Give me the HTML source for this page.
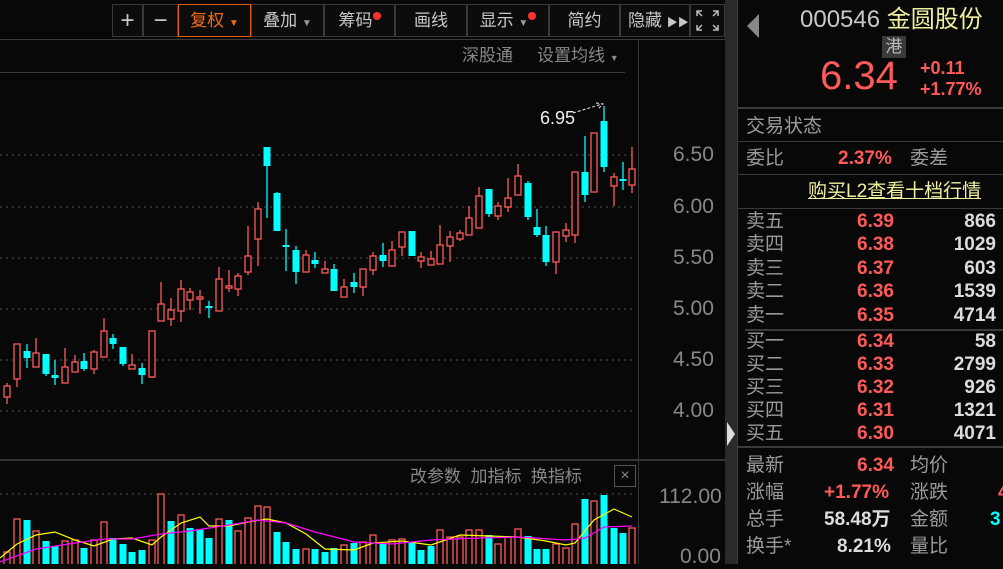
<!DOCTYPE html>
<html><head><meta charset="utf-8"><style>
*{margin:0;padding:0;box-sizing:border-box}
body{width:1003px;height:564px;background:#080808;overflow:hidden;position:relative;font-family:"Liberation Sans","Noto Sans CJK SC",sans-serif;color:#aaa}
.a{position:absolute;white-space:nowrap;line-height:24px}
.btn{position:absolute;top:4px;height:33px;border:1px solid #3a3a3a;color:#c8c8c8;font-size:17px;line-height:31px;text-align:center;background:#0c0c0c}
.lab{color:#9a9a9a;font-size:19px}
.r{color:#ff5a5a;font-weight:bold;font-size:19px}
.w{color:#dcdcdc;font-weight:bold;font-size:19px}
.hl{position:absolute;height:2px;background:#3a3a3a}
</style></head><body>
<div class="btn" style="left:112px;width:31px;font-size:24px">+</div>
<div class="btn" style="left:143px;width:35px;font-size:24px">−</div>
<div class="btn" style="left:178px;width:73px;color:#f06a1a;border-color:#e0600f">复权 <span style="font-size:10px">▼</span></div>
<div class="btn" style="left:251px;width:73px">叠加 <span style="font-size:10px;color:#999">▼</span></div>
<div class="btn" style="left:324px;width:71px">筹码<span style="display:inline-block;width:8px;height:8px;border-radius:4px;background:#ff3030;vertical-align:top;margin-top:7px"></span></div>
<div class="btn" style="left:395px;width:72px">画线</div>
<div class="btn" style="left:467px;width:82px">显示 <span style="font-size:10px;color:#999">▼</span><span style="display:inline-block;width:8px;height:8px;border-radius:4px;background:#ff3030;vertical-align:top;margin-top:7px"></span></div>
<div class="btn" style="left:549px;width:71px">简约</div>
<div class="btn" style="left:620px;width:70px;text-align:left;padding-left:7px">隐藏 <span style="font-size:11px">▶▶</span></div>
<div class="btn" style="left:690px;width:35px">
<svg width="33" height="31" viewBox="0 0 33 31"><g stroke="#bbb" stroke-width="1.5" fill="none"><path d="M6 11V6h5M6 6l5 5M27 11V6h-5M27 6l-5 5M6 20v5h5M6 25l5-5M27 20v5h-5M27 25l-5-5"/></g></svg></div>
<div class="hl" style="left:0;top:39px;width:737px;height:1px"></div>
<div class="a lab" style="left:462px;top:44px;font-size:17px;color:#888">深股通</div>
<div class="a lab" style="left:537px;top:44px;font-size:17px;color:#888">设置均线 <span style="font-size:9px">▼</span></div>
<div class="hl" style="left:0;top:72px;width:625px;height:1px"></div>
<div class="a" style="left:638px;top:40px;width:1px;height:524px;background:#333"></div>
<div class="a" style="left:725px;top:0;width:12px;height:564px;background:#2a2a2a"></div>
<svg class="a" style="left:727px;top:422px" width="8" height="24"><path d="M0 0L8 12L0 24Z" fill="#ddd"/></svg>
<div class="a" style="left:737px;top:0;width:1px;height:564px;background:#3a3a3a"></div>
<div class="a" style="left:673px;top:143px;font-size:21px;color:#888">6.50</div>
<div class="a" style="left:673px;top:195px;font-size:21px;color:#888">6.00</div>
<div class="a" style="left:673px;top:246px;font-size:21px;color:#888">5.50</div>
<div class="a" style="left:673px;top:297px;font-size:21px;color:#888">5.00</div>
<div class="a" style="left:673px;top:348px;font-size:21px;color:#888">4.50</div>
<div class="a" style="left:673px;top:399px;font-size:21px;color:#888">4.00</div>
<div class="a" style="left:659px;top:485px;font-size:21px;color:#888">112.00</div>
<div class="a" style="left:680px;top:545px;font-size:21px;color:#888">0.00</div>
<div class="a" style="left:0;top:459px;width:725px;height:2px;background:#333"></div>
<div class="a lab" style="left:410px;top:465px;font-size:17px;color:#888">改参数 &nbsp;加指标 &nbsp;换指标</div>
<div class="a" style="left:614px;top:465px;width:22px;height:22px;border:1px solid #555;color:#888;font-size:16px;line-height:20px;text-align:center">×</div>
<div class="a" style="left:540px;top:106px;font-size:18px;color:#eee">6.95</div>
<svg id="ch" class="a" style="left:0;top:0" width="638" height="564"></svg>
<svg class="a" style="left:747px;top:14px" width="12" height="24"><path d="M12 0L0 12L12 24Z" fill="#888"/></svg>
<div class="a" style="left:800px;top:6px;font-size:24px;line-height:28px;color:#c8c8c8">000546 <span style="color:#f0f0a0">金圆股份</span></div>
<div class="a" style="left:882px;top:36px;width:24px;height:22px;background:#3a3a3a;color:#bbb;font-size:17px;line-height:22px;text-align:center">港</div>
<div class="a" style="left:820px;top:56px;font-size:40px;line-height:40px;color:#ff5a5a">6.34</div>
<div class="a r" style="left:920px;top:57px;font-size:18px;line-height:22px">+0.11</div>
<div class="a r" style="left:920px;top:78px;font-size:18px;line-height:22px">+1.77%</div>
<div class="hl" style="left:737px;top:107px;width:266px"></div>
<div class="a lab" style="left:746px;top:115px">交易状态</div>
<div class="hl" style="left:737px;top:141px;width:266px;height:1px"></div>
<div class="a lab" style="left:746px;top:147px">委比</div>
<div class="a r" style="left:838px;top:147px">2.37%</div>
<div class="a lab" style="left:910px;top:147px">委差</div>
<div class="hl" style="left:737px;top:174px;width:266px;height:1px"></div>
<div class="a" style="left:808px;top:180px;font-size:19px;color:#f0f0a0;text-decoration:underline">购买L2查看十档行情</div>
<div class="hl" style="left:737px;top:208px;width:266px;height:1px"></div>
<div id="ob"></div>
<div class="hl" style="left:745px;top:329px;width:258px"></div>
<div class="hl" style="left:737px;top:446px;width:266px"></div>
<div class="a lab" style="left:746px;top:454px">最新</div><div class="a r" style="left:857px;top:454px">6.34</div><div class="a lab" style="left:910px;top:454px">均价</div>
<div class="a lab" style="left:746px;top:481px">涨幅</div><div class="a r" style="left:824px;top:481px">+1.77%</div><div class="a lab" style="left:910px;top:481px">涨跌</div><div class="a r" style="left:998px;top:481px">4</div>
<div class="a lab" style="left:746px;top:508px">总手</div><div class="a w" style="left:824px;top:508px">58.48万</div><div class="a lab" style="left:910px;top:508px">金额</div><div class="a w" style="left:990px;top:508px;color:#00ffff">3</div>
<div class="a lab" style="left:746px;top:535px">换手*</div><div class="a w" style="left:837px;top:535px">8.21%</div><div class="a lab" style="left:910px;top:535px">量比</div>
<script>
var ob=[["卖五","6.39","866"],["卖四","6.38","1029"],["卖三","6.37","603"],["卖二","6.36","1539"],["卖一","6.35","4714"],["买一","6.34","58"],["买二","6.33","2799"],["买三","6.32","926"],["买四","6.31","1321"],["买五","6.30","4071"]];
var ys=[210,233,257,280,304,330,353,376,399,422],h="";
ob.forEach(function(o,i){h+='<div class="a lab" style="left:746px;top:'+ys[i]+'px">'+o[0]+'</div><div class="a r" style="left:857px;top:'+ys[i]+'px">'+o[1]+'</div><div class="a w" style="right:7px;top:'+ys[i]+'px">'+o[2]+'</div>';});
document.getElementById('ob').innerHTML=h;
var R="#ff5a5a",C="#00ffff",s="";
[155,207,258,309,360,411].forEach(function(y){s+='<line x1="0" y1="'+y+'" x2="632" y2="'+y+'" stroke="#555" stroke-dasharray="2 4"/>';});
s+='<line x1="0" y1="494" x2="632" y2="494" stroke="#555" stroke-dasharray="2 4"/>';
var c=[[7,383,386,397,404,R],[17,344,344,379,387,R],[27,344,351,358,368,C],[36,338,353,367,367,R],[46,354,354,374,376,C],[55,360,375,378,385,C],[65,348,367,383,383,R],[75,355,362,372,372,R],[84,353,361,369,371,C],[94,350,352,369,374,R],[104,318,331,357,357,R],[113,334,338,344,349,C],[123,347,347,364,366,C],[132,354,365,369,369,R],[142,363,368,375,384,C],[152,331,331,377,378,R],[161,282,304,321,321,R],[171,298,310,319,326,R],[181,280,289,311,322,R],[190,288,292,300,310,R],[200,290,297,299,314,R],[209,301,306,308,318,C],[219,267,279,311,311,R],[229,270,286,288,292,R],[238,273,276,289,296,R],[248,226,256,272,275,R],[258,202,209,239,266,R],[267,147,147,166,218,C],[277,192,193,231,231,C],[286,229,245,247,271,C],[296,246,250,272,284,C],[306,250,255,272,272,R],[315,252,260,264,268,C],[325,261,269,273,273,R],[334,264,269,291,291,C],[344,279,287,297,297,R],[354,273,282,287,293,C],[363,269,269,287,296,R],[373,252,256,270,275,R],[383,243,255,261,267,C],[392,241,250,266,266,R],[402,232,232,247,256,R],[412,231,231,256,256,C],[421,252,257,261,268,R],[431,251,259,265,265,R],[440,225,245,264,264,R],[450,231,237,246,262,R],[460,230,233,239,241,R],[469,206,218,235,235,R],[479,187,196,228,228,R],[489,189,189,214,217,C],[498,202,206,216,220,R],[508,178,198,207,212,R],[518,164,176,195,195,R],[528,181,183,217,220,C],[537,209,227,235,237,C],[546,226,235,262,266,C],[556,232,232,262,274,R],[566,223,230,236,242,R],[575,172,172,235,243,R],[585,136,172,195,202,C],[594,133,133,192,192,R],[604,106,121,167,172,C],[614,173,177,186,206,R],[623,162,179,181,190,C],[632,147,169,185,193,R]];
c.forEach(function(k){var x=k[0],col=k[5];s+='<line x1="'+x+'" y1="'+k[1]+'" x2="'+x+'" y2="'+k[4]+'" stroke="'+col+'" stroke-width="1.3"/>';var hh=Math.max(k[3]-k[2],1.5);
if(col==C)s+='<rect x="'+(x-3.5)+'" y="'+k[2]+'" width="7" height="'+hh+'" fill="'+C+'"/>';else s+='<rect x="'+(x-3)+'" y="'+k[2]+'" width="6" height="'+hh+'" fill="#080808" stroke="'+R+'" stroke-width="1.3"/>';});
s+='<path d="M573 113L602 104M596 103L603 104L598 109" stroke="#eee" fill="none" stroke-dasharray="3 2"/>';
var v=[[7,552,R],[17,519,R],[27,520,C],[36,531,R],[46,541,C],[55,546,C],[65,541,R],[75,540,R],[84,548,C],[94,540,R],[104,522,R],[113,538,C],[123,544,C],[132,552,C],[142,550,C],[152,540,R],[161,494,R],[171,521,C],[181,515,R],[190,528,C],[200,529,C],[209,538,C],[219,519,R],[229,520,C],[238,531,R],[248,518,R],[258,506,R],[267,507,R],[277,532,C],[286,542,C],[296,549,C],[306,549,R],[315,549,C],[325,552,C],[334,548,C],[344,545,R],[354,543,C],[363,542,R],[373,535,R],[383,544,C],[392,540,R],[402,539,R],[412,543,C],[421,550,C],[431,546,C],[440,530,R],[450,537,R],[460,537,R],[469,530,R],[479,530,R],[489,535,C],[498,544,R],[508,537,R],[518,529,R],[528,536,C],[537,549,C],[546,549,C],[556,544,R],[566,548,R],[575,524,R],[585,499,C],[594,501,R],[604,495,C],[614,528,C],[623,533,C],[632,528,R]];
v.forEach(function(b){if(b[2]==C)s+='<rect x="'+(b[0]-3.5)+'" y="'+b[1]+'" width="7" height="'+(570-b[1])+'" fill="'+C+'"/>';else s+='<rect x="'+(b[0]-3)+'" y="'+b[1]+'" width="6" height="'+(570-b[1])+'" fill="none" stroke="'+R+'" stroke-width="1.3"/>';});
s+='<polyline fill="none" stroke="#ffff00" stroke-width="1.2" points="0,558 17,544 36,535 55,532 75,540 94,546 113,539 132,538 152,545 161,537 181,523 200,517 209,526 229,526 248,522 267,519 286,523 306,534 325,549 354,550 373,543 402,541 431,545 460,535 489,536 518,537 546,541 566,545 575,543 594,520 614,509 632,517"/>';
s+='<polyline fill="none" stroke="#ff00ff" stroke-width="1.2" points="0,562 36,549 75,543 104,539 132,539 161,534 190,531 229,525 258,520 286,523 315,532 354,542 392,544 431,540 479,538 518,537 566,540 585,538 604,527 632,526"/>';
document.getElementById('ch').innerHTML=s;
</script>
</body></html>
